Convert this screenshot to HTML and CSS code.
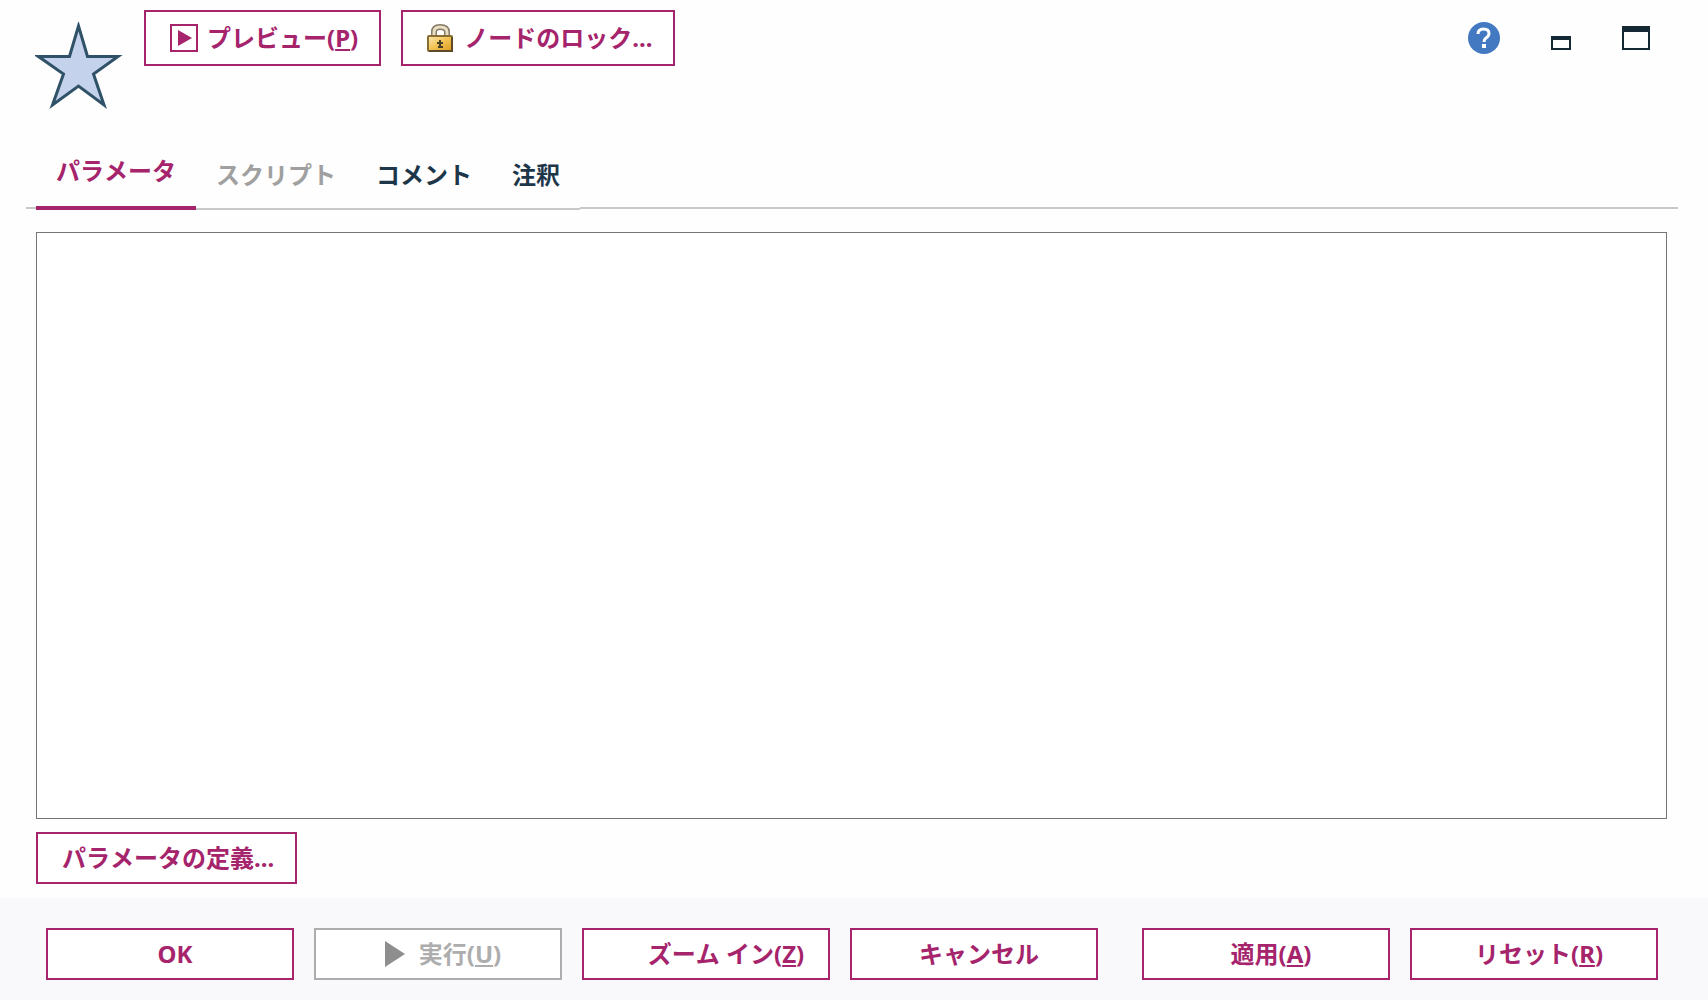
FILE: index.html
```
<!DOCTYPE html>
<html lang="ja">
<head>
  <meta charset="UTF-8" />
  <title>パラメータ</title>
  <meta name="viewport" content="width=device-width, initial-scale=1.0" />
  <link rel="stylesheet" href="styles.css">
</head>
<body>
  <header>
    <svg class="star" viewBox="0 0 88 88" aria-hidden="true">
      <path d="M43.5 4 L52.5 34.5 H83 L58.500 52 L69 83 L43.500 64 L17.500 83 L28.500 52 L3.500 34.500 H34.500 Z" fill="#c4d3eb" stroke="#2f5269" stroke-width="3" />
    </svg>

    <div class="toolbar">
      <button type="button" class="btn btn-tool">
        <svg class="icon" viewBox="0 0 28 28" aria-hidden="true">
          <rect x="1" y="1" width="26" height="26" fill="none" stroke="#a5246c" stroke-width="2" />
          <path d="M8 6 L22 14 L8 22 Z" fill="#a5246c" />
        </svg>
        <span>プレビュー(<u>P</u>)</span>
      </button>
      <button type="button" class="btn btn-tool">
        <svg class="icon" viewBox="0 0 28 28" aria-hidden="true">
          <defs>
            <linearGradient id="brass" x1="0" y1="0" x2="1" y2="1">
              <stop offset="0" stop-color="#fbe9b4" />
              <stop offset="0.500" stop-color="#f2c355" />
              <stop offset="1" stop-color="#e09a1c" />
            </linearGradient>
          </defs>
          <path d="M7 13 V8 Q7 3 13 3 Q20 3 20 8 V13" fill="none" stroke="#857b68" stroke-width="6" />
          <path d="M7 13 V8 Q7 3 13 3 Q20 3 20 8 V13" fill="none" stroke="#e9dfc4" stroke-width="3" />
          <rect x="1" y="12" width="24" height="15" rx="1" fill="url(#brass)" stroke="#8a6d33" stroke-width="2" />
          <path d="M2 27 H25 V13" fill="none" stroke="#5d4a28" stroke-width="2" />
          <path d="M12 16 H14 V18 H16 V20 H14 V22 H16 V24 H11 V22 H12 V20 H10 V18 H12 Z" fill="#4b4028" />
        </svg>
        <span>ノードのロック...</span>
      </button>
    </div>

    <div class="window-controls">
      <button type="button" class="control" aria-label="ヘルプ">
        <svg width="32" height="32" viewBox="0 0 32 32">
          <circle cx="16" cy="16" r="16" fill="#4279c1" />
          <path d="M10 12 Q10 7 15.500 7 Q21 7 21 11.500 Q21 14 18 16 Q16 17.500 16 20" fill="none" stroke="#fff" stroke-width="3" />
          <rect x="14" y="22" width="4" height="4" fill="#fff" />
        </svg>
      </button>
      <button type="button" class="control" aria-label="最小化">
        <svg width="20" height="32" viewBox="0 0 20 32">
          <path d="M0 14 H20 V28 H0 Z M2 18 V26 H18 V18 Z" fill="#152935" fill-rule="evenodd" />
        </svg>
      </button>
      <button type="button" class="control" aria-label="最大化">
        <svg width="28" height="32" viewBox="0 0 28 32">
          <path d="M0 4 H28 V28 H0 Z M2 10 V26 H26 V10 Z" fill="#152935" fill-rule="evenodd" />
        </svg>
      </button>
    </div>
  </header>

  <div class="tabs" role="tablist">
    <button type="button" class="tab active" role="tab" id="tab-params" aria-selected="true" aria-controls="params">パラメータ</button>
    <button type="button" class="tab" role="tab" aria-selected="false" disabled>スクリプト</button>
    <button type="button" class="tab" role="tab" aria-selected="false">コメント</button>
    <button type="button" class="tab" role="tab" aria-selected="false">注釈</button>
  </div>

  <main id="params" role="tabpanel" aria-labelledby="tab-params">
    <div class="param-list"></div>
    <button type="button" class="btn btn-define">パラメータの定義...</button>
  </main>

  <footer>
    <button type="button" class="btn">OK</button>
    <button type="button" class="btn btn-run" disabled>
      <svg width="20" height="26" viewBox="0 0 20 26" aria-hidden="true">
        <path d="M0 0 L20 13 L0 26 Z" fill="#8e8e8e" />
      </svg>
      <span>実行(<u>U</u>)</span>
    </button>
    <button type="button" class="btn btn-zoom"><span>ズーム イン(<u>Z</u>)</span></button>
    <button type="button" class="btn">キャンセル</button>
    <div class="footer-right">
      <button type="button" class="btn"><span>適用(<u>A</u>)</span></button>
      <button type="button" class="btn"><span>リセット(<u>R</u>)</span></button>
    </div>
  </footer>
</body>
</html>
```
FILE: styles.css
```
* {
  box-sizing: border-box;
}

body {
  display: flex;
  flex-direction: column;
  min-height: 100vh;
  margin: 0;
  background-color: #fefefe;
  color: #1d3649;
}

body, button {
  font-family: "Noto Sans", "Noto Sans CJK JP", sans-serif;
  font-size: 24px;
  font-weight: bold;
  font-kerning: none;
  line-height: 32px;
}

header {
  display: flex;
  align-items: flex-start;
  padding: 10px 58px 0 35px;
}

.star {
  width: 88px;
  height: 88px;
  margin: 12px 21px 0 0;
}

.toolbar {
  display: flex;
  gap: 20px;
}

.btn {
  display: flex;
  align-items: center;
  justify-content: center;
  height: 52px;
  border: 2px solid #a5246c;
  background-color: #fff;
  color: #a5246c;
  white-space: nowrap;
  cursor: pointer;
}

.btn u {
  text-decoration-thickness: 2px;
  text-underline-offset: 2px;
}

.btn:disabled {
  border-color: #adadad;
  color: #adadad;
  cursor: default;
}

.btn-tool {
  gap: 9px;
  height: 56px;
  padding: 0 21px 0 24px;
}

.icon {
  width: 28px;
  height: 28px;
}

.window-controls {
  display: flex;
  gap: 51px;
  margin: 12px 0 0 auto;
}

.control {
  padding: 0;
  border: none;
  background: none;
  cursor: pointer;
}

.control svg {
  display: block;
}

.tabs {
  display: flex;
  margin: 40px 30px 0 26px;
  padding-left: 10px;
  border-bottom: 2px solid #c8c8c8;
}

.tab {
  height: 60px;
  margin-bottom: -3px;
  padding: 0 20px 8px;
  border: none;
  border-bottom: 2px solid #c8c8c8;
  background-color: #fefefe;
  color: #1d3649;
  cursor: pointer;
}

.tab:disabled {
  color: #a0a0a0;
  cursor: default;
}

.tab.active {
  padding-bottom: 14px;
  border-bottom: 4px solid #a5246c;
  color: #a5246c;
}

main {
  display: flex;
  flex: 1;
  flex-direction: column;
  align-items: flex-start;
  gap: 13px;
  padding: 23px 41px 14px 36px;
}

.param-list {
  flex: 1;
  width: 100%;
  border: 1px solid #757575;
  background-color: #fff;
}

.btn-define {
  padding: 0 21px 0 24px;
}

footer {
  display: flex;
  gap: 20px;
  padding: 30px 50px 20px 46px;
  background-color: #f9f9fb;
}

footer .btn {
  width: 248px;
  padding: 0 0 0 10px;
}

footer .btn-run {
  gap: 14px;
}

footer .btn-zoom {
  padding-left: 40px;
}

.footer-right {
  display: flex;
  gap: 20px;
  margin-left: auto;
}
```
